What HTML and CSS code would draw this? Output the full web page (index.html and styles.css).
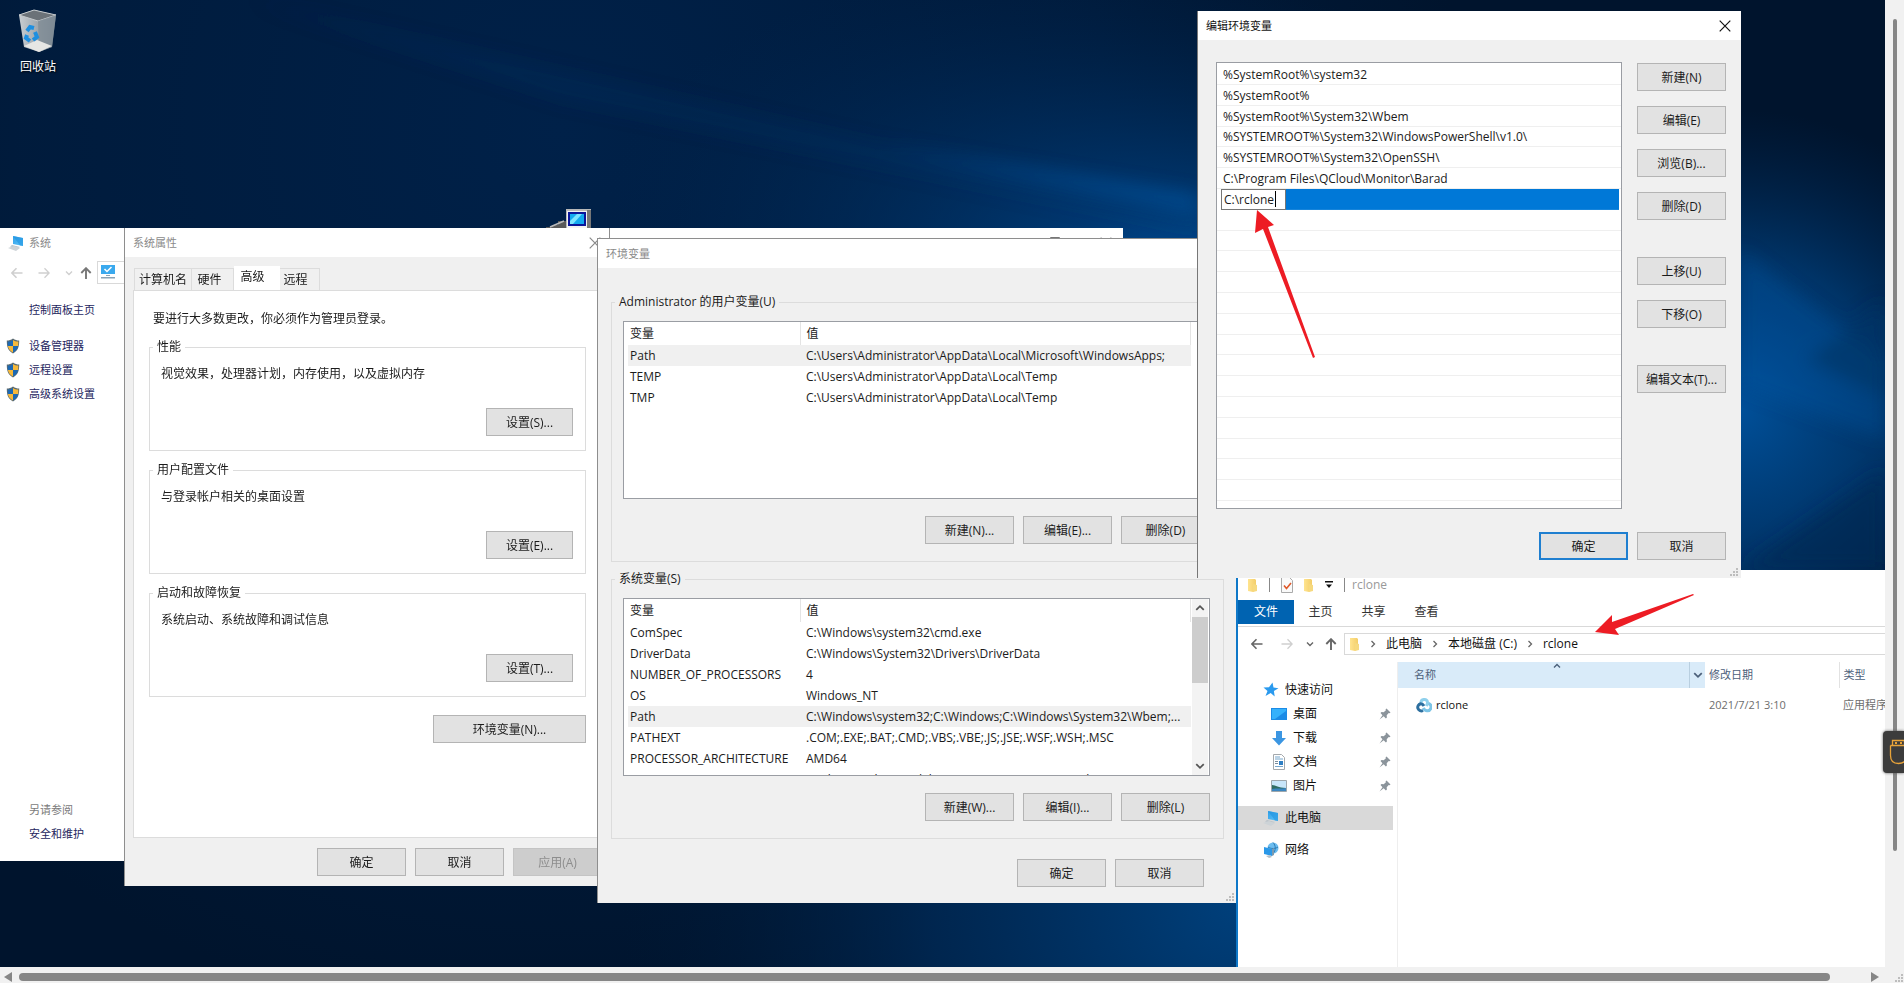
FILE: index.html
```html
<!DOCTYPE html>
<html lang="zh-CN">
<head>
<meta charset="utf-8">
<title>编辑环境变量</title>
<link rel="stylesheet" href="styles.css">
</head>
<body>
<svg class="defs" aria-hidden="true">
  <defs>
    <linearGradient id="g-blue" x1="0" y1="0" x2="1" y2="1"><stop offset="0" stop-color="#2f9fe8"/><stop offset="1" stop-color="#5cc4fa"/></linearGradient>
    <linearGradient id="g-fold" x1="0" y1="0" x2="1" y2="0"><stop offset="0" stop-color="#ffe48f"/><stop offset="1" stop-color="#f3cd69"/></linearGradient>
    <linearGradient id="g-bin" x1="0" y1="0" x2="1" y2="0"><stop offset="0" stop-color="#c9ced2"/><stop offset=".55" stop-color="#9ba3aa"/><stop offset="1" stop-color="#7f8b95"/></linearGradient>
    <symbol id="i-pc" viewBox="0 0 16 16"><path d="M5 1l10 2v8L5 9z" fill="url(#g-blue)"/><path d="M5 1l10 2v8l-3-.6L5 1z" fill="#1f93e0" opacity=".6"/><path d="M4 10l8 2-2 1-8-1.500z" fill="#b9c2c9"/><path d="M0 13l6-2 6 2-4 3z" fill="#cdd3d7"/></symbol>
    <symbol id="i-shield" viewBox="0 0 14 16"><path d="M7 .5C5 2 3 2.500.8 2.500c0 6 1 10 6.200 13 5.200-3 6.200-7 6.200-13C11 2.500 9 2 7 .5z" fill="#5b6a70"/><path d="M7 1.900V8H1.900C1.700 6.500 1.700 5 1.700 3.500 4 3.400 5.500 3 7 1.900z" fill="#1c69b4"/><path d="M7 1.900V8h5.100c.2-1.500.2-3 .2-4.500C10 3.400 8.500 3 7 1.900z" fill="#f6b93b"/><path d="M7 14.400V8H1.900c.6 2.800 2 4.900 5.100 6.400z" fill="#f6b93b"/><path d="M7 14.400V8h5.100c-.6 2.800-2 4.900-5.100 6.400z" fill="#1c69b4"/></symbol>
    <symbol id="i-left" viewBox="0 0 12 12"><path d="M11.500 6H1M5.500 1.300L.9 6l4.600 4.700" fill="none" stroke="currentColor" stroke-width="1.600"/></symbol>
    <symbol id="i-right" viewBox="0 0 12 12"><path d="M.5 6H11M6.500 1.300L11.100 6l-4.600 4.700" fill="none" stroke="currentColor" stroke-width="1.300"/></symbol>
    <symbol id="i-up" viewBox="0 0 12 12"><path d="M6 12V1.500M1.300 6L6 1.200 10.700 6" fill="none" stroke="currentColor" stroke-width="1.900"/></symbol>
    <symbol id="i-down" viewBox="0 0 8 8"><path d="M1 2.500l3 3 3-3" fill="none" stroke="currentColor" stroke-width="1.400"/></symbol>
    <symbol id="i-chev" viewBox="0 0 8 8"><path d="M2.500 1l3 3-3 3" fill="none" stroke="currentColor" stroke-width="1.300"/></symbol>
    <symbol id="i-caret" viewBox="0 0 8 8"><path d="M1 5.500l3-3 3 3" fill="none" stroke="currentColor" stroke-width="1.400"/></symbol>
    <symbol id="i-x" viewBox="0 0 12 12"><path d="M.7.7l10.600 10.600M11.300.7L.7 11.300" fill="none" stroke="currentColor" stroke-width="1.200"/></symbol>
    <symbol id="i-folder" viewBox="0 0 10 14"><path d="M0 1h7l1 1v10l-3 2-5-1z" fill="url(#g-fold)"/><path d="M5 6l4 1v6l-4 1z" fill="#f6d97f"/></symbol>
    <symbol id="i-pin" viewBox="0 0 12 12"><path d="M7.500.5l4 4-1 .8-.8-.2-2 2.200.2 2.200-1 1L4.700 8.300.5 11.500l3-4.300L1.500 5l1-1 2.200.3 2.200-2-.3-1z" fill="#8b949b"/></symbol>
    <symbol id="i-grip" viewBox="0 0 10 10"><path d="M7 1h2v2H7zM7 4h2v2H7zM4 4h2v2H4zM7 7h2v2H7zM4 7h2v2H4zM1 7h2v2H1z" fill="#bdbdbd"/></symbol>
  </defs>
</svg>

<div class="viewer">
  <main class="desktop">
    <svg class="wallpaper" viewBox="0 0 1885 967" preserveAspectRatio="none" aria-hidden="true">
      <defs>
        <radialGradient id="w1" gradientUnits="userSpaceOnUse" cx="1230" cy="300" r="620" gradientTransform="matrix(1 .18 -.05 .5 15 -70)"><stop offset="0" stop-color="#005cae"/><stop offset=".3" stop-color="#004080" stop-opacity=".75"/><stop offset="1" stop-color="#002650" stop-opacity="0"/></radialGradient>
        <radialGradient id="w2" gradientUnits="userSpaceOnUse" cx="1740" cy="410" r="300"><stop offset="0" stop-color="#004f98"/><stop offset=".5" stop-color="#003c76" stop-opacity=".8"/><stop offset="1" stop-color="#002a58" stop-opacity="0"/></radialGradient>
        <radialGradient id="w3" gradientUnits="userSpaceOnUse" cx="1240" cy="900" r="620"><stop offset="0" stop-color="#00407c"/><stop offset=".5" stop-color="#002a57" stop-opacity=".8"/><stop offset="1" stop-color="#001a38" stop-opacity="0"/></radialGradient>
        <radialGradient id="w4" gradientUnits="userSpaceOnUse" cx="560" cy="130" r="900"><stop offset="0" stop-color="#002149"/><stop offset=".6" stop-color="#001c3e" stop-opacity=".9"/><stop offset="1" stop-color="#001b3c" stop-opacity="0"/></radialGradient>
        <filter id="soft" x="-10%" y="-30%" width="120%" height="160%"><feGaussianBlur stdDeviation="9"/></filter>
      </defs>
      <rect width="1885" height="967" fill="#00142d"/>
      <rect width="1885" height="967" fill="url(#w4)"/>
      <rect width="1885" height="967" fill="url(#w1)"/>
      <rect width="1885" height="967" fill="url(#w2)"/>
      <rect y="600" width="1885" height="367" fill="url(#w3)"/>
      <g filter="url(#soft)">
        <path d="M250 0L1198 215V232L560 100z" fill="#003f80" opacity=".15"/>
        <path d="M880 145L1198 195V212z" fill="#0067bd" opacity=".4"/>
        <path d="M1740 250l145 110v80L1740 385z" fill="#005cab" opacity=".3"/>
        <path d="M1885 300l-80 60 80 40z" fill="#003466" opacity=".6"/>
        <path d="M1740 570l145-100v100z" fill="#002a55" opacity=".7"/>
      </g>
    </svg>

    <figure class="recycle">
      <svg class="recycle-icon" viewBox="0 0 40 44" aria-hidden="true"><path d="M1 6L16 1l22 5-4 32-13 5-15-5z" fill="url(#g-bin)"/><path d="M1 6L16 1l22 5-18 6z" fill="#6b7278"/><path d="M1 6l15-5 22 5-18 6z" fill="none" stroke="#c5cacd" stroke-width="1"/><path d="M20 12l18-6-4 32-13 5z" fill="#7e8a94" opacity=".7"/><path d="M6 37l13-6 15 6-13 6z" fill="#e6e6e4"/><g fill="none" stroke="#1e8fe0" stroke-width="4"><path d="M9 22l3-4 4 1"/><path d="M17 23l2 5-4 3"/><path d="M12 32l-4-3 1-3"/></g></svg>
      <figcaption>回收站</figcaption>
    </figure>

    <svg class="remote-icon" viewBox="0 0 48 24" aria-hidden="true"><path d="M0 18h6v-2h6v-4h8v8H0z" fill="#5a5a5a"/><path d="M4 18l14-6" stroke="#bbb" stroke-width="1.500"/><path d="M20 2V0h25v24H20z" fill="#b8b8b8"/><path d="M21 2h20v22H21z" fill="#f2f2f2"/><path d="M41 1h4v23h-4z" fill="#777"/><path d="M22 3h18v14H22z" fill="#0a159a"/><path d="M24 5h14v10H24z" fill="#12a9f0"/><path d="M27 15l9-10h-5l-7 7v3z" fill="#7be4ff"/></svg>

    <section class="window sys">
      <header class="bar sys-bar"><svg width="16" height="16"><use href="#i-pc"/></svg><span>系统</span>
        <span class="sys-ctl"><svg width="10" height="12" viewBox="0 0 10 12"><path d="M.5.5h9v9h-9z" fill="none" stroke="#777"/></svg><svg width="12" height="12"><use href="#i-x"/></svg></span>
      </header>
      <div class="sys-nav">
        <svg class="faint" width="12" height="12"><use href="#i-left"/></svg><svg class="faint" width="12" height="12"><use href="#i-right"/></svg><svg class="faint" width="8" height="8"><use href="#i-down"/></svg><svg width="12" height="12"><use href="#i-up"/></svg>
        <span class="sys-addr"><svg width="16" height="16" viewBox="0 0 16 16"><path d="M1 1h14v9H1z" fill="#3aa9ee"/><path d="M4.500 5l2.500 2.500L11.500 3" fill="none" stroke="#fff" stroke-width="1.500"/><path d="M6 11h4v1H6zM1 13h14v1.500H1z" fill="#8aa3b5"/></svg></span>
      </div>
      <nav class="sys-side">
        <a class="plain home" href="#">控制面板主页</a>
        <a href="#"><svg width="14" height="16"><use href="#i-shield"/></svg>设备管理器</a>
        <a href="#"><svg width="14" height="16"><use href="#i-shield"/></svg>远程设置</a>
        <a href="#"><svg width="14" height="16"><use href="#i-shield"/></svg>高级系统设置</a>
        <span class="plain also">另请参阅</span>
        <a class="plain" href="#">安全和维护</a>
      </nav>
    </section>

    <section class="window props">
      <header class="bar"><span>系统属性</span><svg width="12" height="12"><use href="#i-x"/></svg></header>
      <div class="tabs"><button class="tab t-name">计算机名</button><button class="tab t-hard">硬件</button><button class="tab t-adv on">高级</button><button class="tab t-rem">远程</button></div>
      <div class="panel">
        <p class="note">要进行大多数更改，你必须作为管理员登录。</p>
        <fieldset><legend>性能</legend><p>视觉效果，处理器计划，内存使用，以及虚拟内存</p><button class="btn">设置(S)...</button></fieldset>
        <fieldset><legend>用户配置文件</legend><p>与登录帐户相关的桌面设置</p><button class="btn">设置(E)...</button></fieldset>
        <fieldset><legend>启动和故障恢复</legend><p>系统启动、系统故障和调试信息</p><button class="btn">设置(T)...</button></fieldset>
        <button class="btn wide">环境变量(N)...</button>
      </div>
      <footer class="actions"><button class="btn">确定</button><button class="btn">取消</button><button class="btn" disabled>应用(A)</button></footer>
    </section>

    <section class="window env">
      <header class="bar"><span>环境变量</span></header>
      <div class="env-body">
        <fieldset><legend>Administrator 的用户变量(U)</legend>
          <div class="list">
            <table>
              <thead><tr><th>变量</th><th>值</th></tr></thead>
              <tbody>
                <tr class="sel"><td>Path</td><td>C:\Users\Administrator\AppData\Local\Microsoft\WindowsApps;</td></tr>
                <tr><td>TEMP</td><td>C:\Users\Administrator\AppData\Local\Temp</td></tr>
                <tr><td>TMP</td><td>C:\Users\Administrator\AppData\Local\Temp</td></tr>
              </tbody>
            </table>
          </div>
          <div class="actions"><button class="btn">新建(N)...</button><button class="btn">编辑(E)...</button><button class="btn">删除(D)</button></div>
        </fieldset>
        <fieldset><legend>系统变量(S)</legend>
          <div class="list">
            <table>
              <thead><tr><th>变量</th><th>值</th></tr></thead>
              <tbody>
                <tr><td>ComSpec</td><td>C:\Windows\system32\cmd.exe</td></tr>
                <tr><td>DriverData</td><td>C:\Windows\System32\Drivers\DriverData</td></tr>
                <tr><td>NUMBER_OF_PROCESSORS</td><td>4</td></tr>
                <tr><td>OS</td><td>Windows_NT</td></tr>
                <tr class="sel"><td>Path</td><td>C:\Windows\system32;C:\Windows;C:\Windows\System32\Wbem;...</td></tr>
                <tr><td>PATHEXT</td><td>.COM;.EXE;.BAT;.CMD;.VBS;.VBE;.JS;.JSE;.WSF;.WSH;.MSC</td></tr>
                <tr><td>PROCESSOR_ARCHITECTURE</td><td>AMD64</td></tr>
                <tr><td>PROCESSOR_IDENTIFIER</td><td>Intel64 Family 6 Model 85 Stepping 5, GenuineIntel</td></tr>
              </tbody>
            </table>
            <div class="vscroll"><svg width="10" height="10"><use href="#i-caret"/></svg><i></i><svg width="10" height="10"><use href="#i-down"/></svg></div>
          </div>
          <div class="actions"><button class="btn">新建(W)...</button><button class="btn">编辑(I)...</button><button class="btn">删除(L)</button></div>
        </fieldset>
      </div>
      <footer class="actions"><button class="btn">确定</button><button class="btn">取消</button></footer>
      <svg class="grip" width="10" height="10"><use href="#i-grip"/></svg>
    </section>

    <section class="window explorer">
      <header class="quick">
        <svg width="10" height="14"><use href="#i-folder"/></svg><i></i>
        <svg width="12" height="16" viewBox="0 0 12 16"><path d="M.5.5h8l3 3v12H.5z" fill="#fafafa" stroke="#aaa"/><path d="M3 8.500l2.500 3L10 6" fill="none" stroke="#e0592a" stroke-width="1.600"/></svg>
        <svg width="10" height="14"><use href="#i-folder"/></svg>
        <svg width="8" height="8" viewBox="0 0 8 8"><path d="M0 0h8v1.500H0zM1 3.500h6L4 7z" fill="#111"/></svg><i></i>
        <span>rclone</span>
      </header>
      <nav class="ribbon"><button class="file">文件</button><button>主页</button><button>共享</button><button>查看</button></nav>
      <div class="address">
        <svg class="n-back" width="12" height="12"><use href="#i-left"/></svg><svg class="n-fwd faint" width="12" height="12"><use href="#i-right"/></svg><svg class="n-hist" width="8" height="8"><use href="#i-down"/></svg><svg class="n-up" width="12" height="12"><use href="#i-up"/></svg>
        <div class="crumbs"><svg width="10" height="16"><use href="#i-folder"/></svg><svg width="8" height="8"><use href="#i-chev"/></svg><span>此电脑</span><svg width="8" height="8"><use href="#i-chev"/></svg><span>本地磁盘 (C:)</span><svg width="8" height="8"><use href="#i-chev"/></svg><span>rclone</span></div>
      </div>
      <div class="files">
        <nav class="tree">
          <a href="#"><svg width="16" height="16" viewBox="0 0 16 16"><path d="M9.500.5l1 5 5 .8-4.600 2.700.8 5.500-4-3.500L2.500 14l2-5L.5 5.500l5.500-.3z" fill="#2a9aee"/></svg>快速访问</a>
          <a class="sub" href="#"><svg width="16" height="16" viewBox="0 0 16 16"><path d="M0 2h16v12H0z" fill="#1b8be6"/><path d="M1 3h14v2L4 13H1z" fill="#35b1fb"/></svg>桌面<svg class="pin" width="12" height="12"><use href="#i-pin"/></svg></a>
          <a class="sub" href="#"><svg width="16" height="16" viewBox="0 0 16 16"><path d="M5 1h6v7h4l-7 7.500L1 8h4z" fill="#3b96e2"/></svg>下载<svg class="pin" width="12" height="12"><use href="#i-pin"/></svg></a>
          <a class="sub" href="#"><svg width="16" height="16" viewBox="0 0 16 16"><path d="M2.500.5h8l3 3v12h-11z" fill="#fff" stroke="#a4a9ad"/><path d="M4 3h5M4 5h8M4 12.500h8" stroke="#77a7cd"/><path d="M4 7.500h3M4 9.500h3" stroke="#7a8e9e"/><path d="M8 7h4v4H8z" fill="#2f7fc4"/></svg>文档<svg class="pin" width="12" height="12"><use href="#i-pin"/></svg></a>
          <a class="sub" href="#"><svg width="16" height="16" viewBox="0 0 16 16"><path d="M.5 2.500h15v11H.5z" fill="#c8e6fa" stroke="#9ea7ad"/><path d="M1 7c4 0 6 3 14 3v3H1z" fill="#2f6d63"/><path d="M1 11c5-1 9 0 14-1v3H1z" fill="#3c86c0"/></svg>图片<svg class="pin" width="12" height="12"><use href="#i-pin"/></svg></a>
          <a class="cur" href="#"><svg width="16" height="16"><use href="#i-pc"/></svg>此电脑</a>
          <a href="#"><svg width="16" height="16" viewBox="0 0 16 16"><circle cx="10" cy="6" r="5.500" fill="#6cbdf0"/><path d="M10 .5c3 3 3 8 0 11M5 5c3 2 7 2 10 0" fill="none" stroke="#2b7bb5"/><path d="M1 5l8 2v7l-8-2z" fill="#2a98e8"/><path d="M9 7l2-1v7l-2 1z" fill="#7b9ab0"/><path d="M3 14l4-1 2 2-3 1z" fill="#b4bfc7"/></svg>网络</a>
        </nav>
        <table class="details">
          <thead><tr><th class="c-name"><span>名称</span><svg class="sort" width="10" height="8"><use href="#i-caret"/></svg></th><th class="c-drop"><svg width="10" height="10"><use href="#i-down"/></svg></th><th class="c-date">修改日期</th><th class="c-type">类型</th></tr></thead>
          <tbody><tr><td colspan="2"><span class="fname"><svg width="16" height="16" viewBox="0 0 16 16"><g fill="none" stroke-width="3"><path d="M5 6a3.300 3.300 0 0 1 6.500-1c.3 1.500-.3 2.500-1.200 4" stroke="#8fd0ec"/><path d="M12.500 6.500a3.700 3.700 0 0 1-1.500 7.200c-2 0-3-1.300-3.800-2.700" stroke="#7cc4e6"/><path d="M7 13.500a3.600 3.600 0 1 1-2.500-6.700c1.500 0 2.700.8 3.500 2.200" stroke="#2d6f9f"/></g></svg>rclone</span></td><td>2021/7/21 3:10</td><td>应用程序</td></tr></tbody>
        </table>
      </div>
    </section>

    <section class="window edit">
      <header class="bar"><span>编辑环境变量</span><svg width="12" height="12"><use href="#i-x"/></svg></header>
      <div class="edit-body">
        <ul class="paths">
          <li>%SystemRoot%\system32</li><li>%SystemRoot%</li><li>%SystemRoot%\System32\Wbem</li><li>%SYSTEMROOT%\System32\WindowsPowerShell\v1.0\</li><li>%SYSTEMROOT%\System32\OpenSSH\</li><li>C:\Program Files\QCloud\Monitor\Barad</li>
          <li class="editing"><label><input type="text" value="C:\rclone" aria-label="路径"><i class="cursor"></i></label></li>
          <li></li><li></li><li></li><li></li><li></li><li></li><li></li><li></li><li></li><li></li><li></li><li></li><li></li><li></li>
        </ul>
        <div class="side-btns"><button class="btn">新建(N)</button><button class="btn">编辑(E)</button><button class="btn">浏览(B)...</button><button class="btn">删除(D)</button><button class="btn apart">上移(U)</button><button class="btn">下移(O)</button><button class="btn apart">编辑文本(T)...</button></div>
      </div>
      <footer class="actions"><button class="btn default">确定</button><button class="btn">取消</button></footer>
      <svg class="grip" width="10" height="10"><use href="#i-grip"/></svg>
    </section>

    <svg class="mark mark-path" viewBox="0 0 62 148" aria-hidden="true"><path d="M3 0L20 15l-6 2L61 147l-2 1L9 19l-8 4z"/></svg>
    <svg class="mark mark-addr" viewBox="0 0 100 42" aria-hidden="true"><path d="M0 38L17 21v7L98 0l1 1L20 35l4 6z"/></svg>
  </main>

  <div class="page-v"><i></i></div>
  <div class="page-h"><svg width="8" height="10" viewBox="0 0 8 10"><path d="M8 0v10L0 5z"/></svg><i></i><svg width="8" height="10" viewBox="0 0 8 10"><path d="M0 0v10l8-5z"/></svg></div>
  <div class="corner"><svg width="10" height="10"><use href="#i-grip"/></svg></div>
  <button class="usb" aria-label="USB"><svg width="18" height="26" viewBox="0 0 18 26"><path d="M4.500 1.500h12v5h-12zM2.500 6.500h16M2.500 6.500v10c0 5 3 8 8 8s8-3 8-8v-10" fill="none" stroke="#e8a33a" stroke-width="1.300"/><path d="M7 3h2v2H7zM12 3h2v2h-2z" fill="#e8a33a"/></svg></button>
</div>
</body>
</html>
```

FILE: styles.css
```css
* { box-sizing: border-box; }
html, body { height: 100%; }
body {
  margin: 0;
  overflow: hidden;
  font: 12px/16px "Open Sans", "Noto Sans CJK SC", sans-serif;
  color: #1b1b1b;
}
p, ul, figure { margin: 0; padding: 0; }
button, input { font: inherit; color: inherit; }
a { color: inherit; text-decoration: none; }
svg { display: block; flex: none; }
.defs { position: absolute; width: 0; height: 0; }

.viewer {
  position: relative;
  display: grid;
  grid-template: minmax(0, 1fr) 16px / minmax(0, 1fr) 19px;
  height: 100%;
  background: #f1f1f1;
}
.desktop { position: relative; overflow: hidden; background: #00152f; }
.wallpaper { position: absolute; inset: 0; width: 100%; height: 100%; }

.recycle { position: absolute; left: 10px; top: 9px; width: 56px; text-align: center; color: #fff; text-shadow: 1px 1px 2px #000; }
.recycle-icon { width: 40px; height: 44px; margin: 0 auto 6px; }
.remote-icon { position: absolute; left: 546px; top: 209px; width: 48px; height: 24px; }

/* windows */
.window { position: absolute; background: #f0f0f0; }
.bar {
  display: flex;
  align-items: center;
  justify-content: space-between;
  height: 29px;
  padding: 0 8px;
  background: #fff;
  color: #8a8a8a;
  font-size: 11px;
}
.btn {
  display: block;
  width: 89px;
  height: 28px;
  padding: 1px 0 0;
  border: 1px solid #b4b4b4;
  border-radius: 0;
  background: #e2e2e2;
  white-space: nowrap;
}
.btn:disabled { background: #cdcdcd; border-color: #c4c4c4; color: #8d8d8d; }
.btn.default { border: 2px solid #1f7fd0; }
.actions { display: flex; justify-content: flex-end; gap: 9px; }
fieldset { margin: 0; padding: 0; border: 1px solid #dcdcdc; min-width: 0; }
legend { padding: 0 4px; margin-left: 4px; }
.grip { position: absolute; right: 2px; bottom: 1px; }
.faint { color: #cfcfcf; }

/* system window */
.sys { left: 0; top: 228px; width: 1123px; height: 633px; background: #fff; display: flex; flex-direction: column; }
.sys-bar { justify-content: flex-start; gap: 5px; }
.sys-ctl { display: flex; gap: 40px; margin-left: auto; padding-right: 3px; }
.sys-nav { display: flex; align-items: center; gap: 15px; padding: 4px 0 0 11px; height: 27px; color: #777; }
.sys-nav svg:nth-child(4) { margin-left: -8px; }
.sys-addr { flex: 1; height: 23px; margin-left: -10px; padding: 2px; border: 1px solid #d9d9d9; }
.sys-side { flex: 1; display: flex; flex-direction: column; align-items: flex-start; gap: 8px; padding: 18px 0 19px 6px; font-size: 11px; color: #25265e; }
.sys-side a { display: flex; align-items: center; gap: 9px; }
.sys-side .plain { padding-left: 23px; }
.sys-side .home { margin-bottom: 12px; }
.sys-side .also { margin-top: auto; color: #7b7b7b; }

/* system properties */
.props { left: 124px; top: 228px; width: 486px; height: 658px; border: solid #8e8e8e; border-width: 0 1px; display: flex; flex-direction: column; }
.tabs { display: flex; align-items: flex-end; height: 33px; padding-left: 9px; }
.tab { height: 22px; padding: 0; border: 1px solid #dcdcdc; border-width: 1px 1px 0 0; background: #f0f0f0; }
.t-name { width: 58px; border-left-width: 1px; }
.t-hard { width: 42px; padding-right: 6px; }
.t-adv { width: 46px; }
.t-rem { width: 40px; padding-right: 8px; }
.tab.on { height: 24px; padding: 0 8px 3px 0; background: #fff; border-color: #fff; }
.panel { flex: 1; margin: 0 8px 0; padding: 20px 14px 0 15px; border: 1px solid #dcdcdc; background: #fff; }
.note { margin: 0 4px 12px; }
.panel fieldset { padding: 0 12px 14px 11px; margin-bottom: 11px; }
.panel legend { margin-left: -8px; }
.panel fieldset p { margin: 11px 0 26px; }
.panel fieldset .btn { width: 87px; margin-left: auto; }
.panel .wide { width: 153px; margin: 18px 0 0 auto; }
.props .actions { padding: 10px 7px 10px; }

/* environment variables */
.env { left: 597px; top: 238px; width: 640px; height: 665px; border: 1px solid #8e8e8e; border-width: 1px 0 0 1px; }
.env-body { padding: 26px 13px 0; display: flex; flex-direction: column; gap: 9px; }
.env-body fieldset { padding: 11px 13px 17px 11px; }
.env-body legend { margin-left: -8px; }
.list { display: flex; justify-content: space-between; height: 178px; margin-bottom: 17px; padding-left: 4px; overflow: hidden; border: 1px solid #9a9da3; background: #fff; }
.list table { width: 563px; border-collapse: collapse; table-layout: fixed; height: min-content; }
.list th, .list td { height: 21px; padding: 1px 0 0 2px; text-align: left; font-weight: 400; white-space: nowrap; }
.list th { height: 23px; border-right: 1px solid #e4e4e4; }
.list th:first-child { width: 172px; }
.list :is(th, td):nth-child(2) { padding-left: 6px; }
.list .sel { background: #f0f0f0; }
.vscroll { display: flex; flex-direction: column; align-items: center; width: 16px; padding: 4px 0; margin-right: 1px; background: #f3f3f3; color: #555; }
.vscroll i { width: 16px; height: 66px; margin: 4px 0 auto; background: #cdcdcd; }
.env > .actions { padding: 20px 33px 0; }

/* edit dialog */
.edit { left: 1197px; top: 11px; width: 544px; height: 567px; border-left: 1px solid #777; }
.edit .bar { color: #111; padding-right: 10px; }
.edit-body { display: flex; gap: 15px; padding: 22px 15px 23px 18px; }
.paths { flex: 1; height: 447px; display: grid; grid-template-rows: 22px repeat(20, 1fr) 7px; border: 1px solid #9a9da3; background: #fff; list-style: none; }
.paths li { display: flex; align-items: center; padding: 2px 0 0 6px; border-bottom: 1px solid #efefef; white-space: nowrap; }
.paths .editing { margin-right: 2px; padding: 0 0 0 4px; border: 0; background: linear-gradient(#0078d7, #0078d7) right / calc(100% - 60px) no-repeat; }
.editing label { display: flex; align-items: center; width: 65px; height: 100%; border: 1px solid #777; background: #fff; }
.editing input { width: 53px; padding: 1px 0 0 2px; border: 0; outline: 0; background: none; height: 17px; }
.cursor { width: 1px; height: 16px; background: #000; }
.side-btns { display: flex; flex-direction: column; gap: 15px; padding-top: 1px; }
.side-btns .apart { margin-top: 22px; }
.edit .actions { padding-right: 15px; }

/* explorer */
.explorer { left: 1236px; right: 0; top: 570px; bottom: 0; display: flex; flex-direction: column; border-left: 2px solid #0f78c8; background: #fff; overflow: hidden; }
.quick { display: flex; align-items: center; gap: 11px; height: 30px; padding-left: 10px; color: #999; }
.quick i { width: 1px; height: 14px; background: #888; }
.quick span { margin-left: -4px; }
.ribbon { display: flex; align-items: center; height: 27px; padding-bottom: 3px; border-bottom: 1px solid #d9d9d9; }
.ribbon button { width: 53px; height: 24px; padding: 1px 0 0; border: 0; background: none; color: #333; }
.ribbon .file { width: 56px; background: #0063b1; color: #fff; }
.address { display: flex; align-items: center; padding: 6px 0 7px 13px; color: #666; }
.n-fwd { margin-left: 18px; }
.n-hist { margin-left: 13px; }
.n-up { margin: 0 7px 0 11px; }
.crumbs { flex: 1; display: flex; align-items: center; gap: 9px; height: 22px; padding-left: 5px; border: 1px solid #d9d9d9; border-right: 0; color: #111; }
.crumbs svg { color: #666; }
.files { flex: 1; display: flex; min-height: 0; }
.tree { width: 160px; flex: none; padding: 16px 4px 0 0; border-right: 1px solid #eee; color: #111; }
.tree a { display: flex; align-items: center; gap: 6px; height: 24px; padding: 0 2px 0 25px; }
.tree .sub { padding-left: 33px; }
.tree .cur { margin: 8px 0; background: #d9d9d9; }
.pin { margin-left: auto; }
.details { width: 495px; flex: none; border-collapse: collapse; table-layout: fixed; align-self: flex-start; font-size: 11px; color: #6d6d6d; }
.details th { position: relative; height: 26px; padding: 0 0 0 4px; text-align: left; font-weight: 400; color: #4c607a; }
.details td { height: 34px; padding: 0 0 0 4px; white-space: nowrap; overflow: hidden; }
.details th.c-name { width: 291px; padding-left: 16px; background: #d9ebf9; }
.details th.c-drop { width: 16px; padding: 0 3px; background: #d9ebf9; border-left: 1px solid #b9cfe0; }
.sort { position: absolute; left: 53%; top: 0; }
.c-date { width: 134px; border-right: 1px solid #e2e2e2; }
.fname { display: flex; align-items: center; gap: 4px; padding-left: 14px; color: #111; }

/* annotations */
.mark { position: absolute; fill: #ed1c24; }
.mark-path { left: 1254px; top: 210px; width: 62px; height: 148px; }
.mark-addr { left: 1595px; top: 594px; width: 100px; height: 42px; }

/* page scrollbars */
.page-v { display: flex; justify-content: center; padding: 19px 0 116px; }
.page-v i { width: 4px; border-radius: 2px; background: #868686; }
.page-h { display: flex; align-items: center; gap: 7px; padding: 4px 6px 0 4px; fill: #868686; }
.page-h i { flex: 1; height: 8px; margin-right: 34px; border-radius: 4px; background: #868686; }
.corner { display: flex; align-items: flex-end; justify-content: flex-end; }
.usb { position: absolute; right: 0; top: 731px; width: 21px; height: 42px; padding: 0 0 0 5px; border: 0; border-radius: 4px 0 0 4px; background: #3c3c3c; overflow: hidden; box-shadow: 0 0 3px #555; }
```
